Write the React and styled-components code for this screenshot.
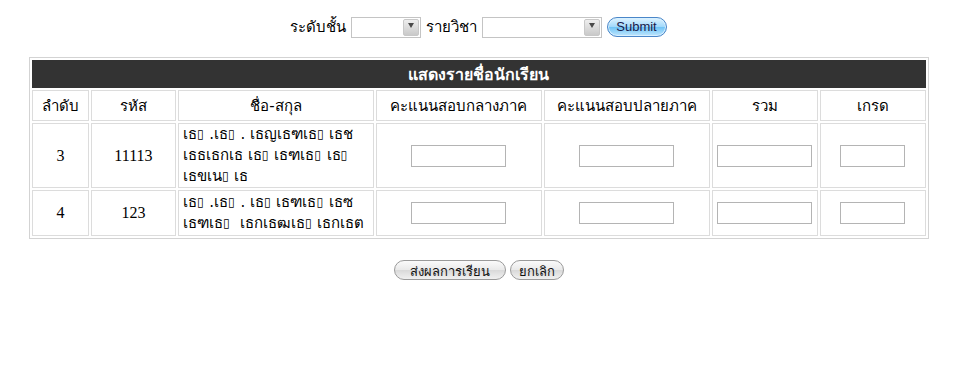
import React from 'react'
import styled, { createGlobalStyle } from 'styled-components'

// undecodable bytes of the mis-encoded names show up as small empty boxes
const T = '\u25AF'

const students = [
    {
        no: '3',
        code: '11113',
        name: [`เธ${T} .เธ${T} . เธญเธฑเธ${T} เธช`, `เธธเธกเธ เธ${T} เธฑเธ${T} เธ${T}`, `เธขเน${T} เธ`],
        tall: true
    },
    {
        no: '4',
        code: '123',
        name: [`เธ${T} .เธ${T} . เธ${T} เธฑเธ${T} เธซ`, `เธฑเธ${T}  เธกเธฒเธ${T} เธกเธต`],
        tall: false
    }
]

const GlobalStyle = createGlobalStyle`
    body{
        margin: 8px;
        background: #fff;
        font-family: "Liberation Serif", "Noto Sans", serif;
        color: #000;
    }
`

const NameLine = ({text}) => (
    <div>
        {text.split(T).map((part,i,arr)=>(
            <React.Fragment key={i}>
                {part}
                {i < arr.length-1 && <Tofu>{T}</Tofu>}
            </React.Fragment>
        ))}
    </div>
)

const App = () => {
  return (
    <>
    <GlobalStyle />
    <Page>
        <FilterBar>
            <Label>ระดับชั้น</Label>
            <SelectBox width={70}><Arrow /></SelectBox>
            <Label>รายวิชา</Label>
            <SelectBox width={120}><Arrow /></SelectBox>
            <SubmitButton>Submit</SubmitButton>
        </FilterBar>
        <Table>
            <colgroup>
                <col style={{width: 57}} />
                <col style={{width: 85}} />
                <col style={{width: 196}} />
                <col style={{width: 166}} />
                <col style={{width: 166}} />
                <col style={{width: 106}} />
                <col style={{width: 106}} />
            </colgroup>
            <thead>
                <tr><Title colSpan={7}>แสดงรายชื่อนักเรียน</Title></tr>
                <tr>
                    <Head>ลำดับ</Head>
                    <Head>รหัส</Head>
                    <Head>ชื่อ-สกุล</Head>
                    <Head>คะแนนสอบกลางภาค</Head>
                    <Head>คะแนนสอบปลายภาค</Head>
                    <Head>รวม</Head>
                    <Head>เกรด</Head>
                </tr>
            </thead>
            <tbody>
                {students.map((s)=>(
                    <Row key={s.no} tall={s.tall}>
                        <Cell>{s.no}</Cell>
                        <Cell>{s.code}</Cell>
                        <NameCell>{s.name.map((l,i)=>(<NameLine key={i} text={l} />))}</NameCell>
                        <Cell><ScoreInput width={95} /></Cell>
                        <Cell><ScoreInput width={95} /></Cell>
                        <Cell><ScoreInput width={95} /></Cell>
                        <Cell><ScoreInput width={65} /></Cell>
                    </Row>
                ))}
            </tbody>
        </Table>
        <Actions>
            <PillButton width={112}>ส่งผลการเรียน</PillButton>
            <PillButton width={54}>ยกเลิก</PillButton>
        </Actions>
    </Page>
    </>
  )
}

const Page = styled.div`
    display: flex;
    flex-direction: column;
    align-items: center;
    padding-top: 8px;
`
const FilterBar = styled.div`
    display: flex;
    align-items: center;
    gap: 5px;
    height: 22px;
    margin-left: 2px;
`
const Label = styled.span`
    font-family: Tahoma, "DejaVu Sans", sans-serif;
    font-size: 15px;
`
const SelectBox = styled.div`
    width: ${p=>p.width}px;
    height: 21px;
    box-sizing: border-box;
    border: 1px solid #c4c4c4;
    background: #fff;
    display: flex;
    justify-content: flex-end;
    padding: 1px;
`
const Arrow = styled.div`
    width: 14px;
    background: linear-gradient(#eeeeee, #c9c9c9);
    border: 1px solid #c8c8c8;
    border-radius: 2px;
    display: flex;
    align-items: center;
    justify-content: center;
    &::after{
        content: '';
        border-left: 3px solid transparent;
        border-right: 3px solid transparent;
        border-top: 5px solid #4a4a4a;
        margin-top: -4px;
    }
`
const SubmitButton = styled.button`
    width: 60px;
    height: 20px;
    padding: 0 0 2px;
    border: 1px solid #4a86c8;
    border-radius: 10px;
    background: linear-gradient(#dff3ff, #9fd8fb 50%, #6ec3f6 51%, #bfe6fd);
    font-family: "Liberation Sans", Arial, sans-serif;
    font-size: 13px;
    color: #1a1a4a;
    box-shadow: inset 0 0 0 1px #d8f0ff;
`
const Table = styled.table`
    width: 900px;
    margin-top: 19px;
    margin-left: 4px;
    border: 1px solid #d3d3d3;
    border-spacing: 2px;
    table-layout: fixed;
    th, td{
        border: 1px solid #dcdcdc;
        padding: 0;
    }
`
const Title = styled.th`
    height: 26px;
    background: #333333;
    color: #fff;
    font-family: Tahoma, "DejaVu Sans", sans-serif;
    font-size: 16px;
    font-weight: bold;
    border-color: #333333 !important;
`
const Head = styled.th`
    height: 29px;
    font-family: Tahoma, "DejaVu Sans", sans-serif;
    font-size: 15px;
    font-weight: normal;
`
const Row = styled.tr`
    height: ${p=>p.tall ? 65 : 46}px;
`
const Cell = styled.td`
    text-align: center;
    font-size: 16px;
`
const NameCell = styled.td`
    padding: 0 4px !important;
    font-family: Tahoma, "DejaVu Sans", sans-serif;
    font-size: 15px;
    line-height: 21px;
    white-space: pre;
`
const Tofu = styled.span`
    font-family: "DejaVu Sans", sans-serif;
    font-size: 12px;
    vertical-align: 1px;
    margin: 0 1px 0 0;
`
const ScoreInput = styled.input`
    width: ${p=>p.width}px;
    height: 22px;
    box-sizing: border-box;
    border: 1px solid #b4b4b4;
    margin: 0;
    padding: 0;
    vertical-align: middle;
`
const Actions = styled.div`
    display: flex;
    gap: 4px;
    margin-top: 21px;
    margin-left: 4px;
`
const PillButton = styled.button`
    width: ${p=>p.width}px;
    height: 20px;
    padding: 0 0 2px;
    border: 1px solid #9a9a9a;
    border-radius: 10px;
    background: linear-gradient(#fafafa, #e9e9e9 50%, #d9d9d9 51%, #f0f0f0);
    font-family: Tahoma, "DejaVu Sans", sans-serif;
    font-size: 13px;
    color: #111;
`

export default App
